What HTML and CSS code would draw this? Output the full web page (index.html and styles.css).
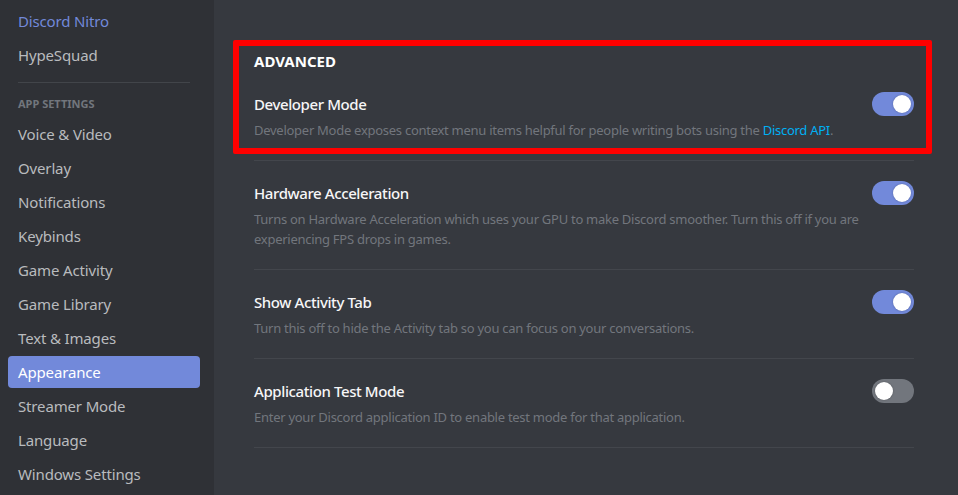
FILE: index.html
```html
<!DOCTYPE html>
<html>
<head>
<meta charset="utf-8">
<link rel="stylesheet" href="styles.css">
</head>
<body>
<div class="app">
  <nav class="sidebar">
    <div class="nav-item nitro">Discord Nitro</div>
    <div class="nav-item">HypeSquad</div>
    <div class="nav-sep"></div>
    <div class="nav-header">App Settings</div>
    <div class="nav-item">Voice &amp; Video</div>
    <div class="nav-item">Overlay</div>
    <div class="nav-item">Notifications</div>
    <div class="nav-item">Keybinds</div>
    <div class="nav-item">Game Activity</div>
    <div class="nav-item">Game Library</div>
    <div class="nav-item">Text &amp; Images</div>
    <div class="nav-item selected">Appearance</div>
    <div class="nav-item">Streamer Mode</div>
    <div class="nav-item">Language</div>
    <div class="nav-item">Windows Settings</div>
  </nav>
  <main class="content">
    <div class="highlight"></div>
    <h2 class="section-title">Advanced</h2>
    <div class="setting">
      <div class="setting-head">
        <div class="setting-title">Developer Mode</div>
        <div class="toggle on"><span class="knob"></span></div>
      </div>
      <div class="setting-desc">Developer Mode exposes context menu items helpful for people writing bots using the <span class="link">Discord API</span>.</div>
    </div>
    <div class="setting">
      <div class="setting-head">
        <div class="setting-title">Hardware Acceleration</div>
        <div class="toggle on"><span class="knob"></span></div>
      </div>
      <div class="setting-desc">Turns on Hardware Acceleration which uses your GPU to make Discord smoother. Turn this off if you are<br>experiencing FPS drops in games.</div>
    </div>
    <div class="setting">
      <div class="setting-head">
        <div class="setting-title">Show Activity Tab</div>
        <div class="toggle on"><span class="knob"></span></div>
      </div>
      <div class="setting-desc">Turn this off to hide the Activity tab so you can focus on your conversations.</div>
    </div>
    <div class="setting">
      <div class="setting-head">
        <div class="setting-title">Application Test Mode</div>
        <div class="toggle"><span class="knob"></span></div>
      </div>
      <div class="setting-desc">Enter your Discord application ID to enable test mode for that application.</div>
    </div>
  </main>
</div>
</body>
</html>
```

FILE: styles.css
```css
* { box-sizing: border-box; }
html, body {
  margin: 0;
  padding: 0;
  height: 100%;
  overflow: hidden;
}
body {
  font-family: "Noto Sans", "Open Sans", sans-serif;
  background: #36393f;
}
.app {
  display: flex;
  height: 495px;
}
.sidebar {
  width: 214px;
  flex-shrink: 0;
  background: #2f3136;
  padding: 5px 14px 0 8px;
  display: flex;
  flex-direction: column;
}
.nav-item {
  height: 32px;
  line-height: 32px;
  padding: 0 10px;
  margin-bottom: 2px;
  font-size: 15px;
  letter-spacing: -0.15px;
  color: #b9bbbe;
  border-radius: 4px;
  white-space: nowrap;
}
.nav-item.nitro { color: #7289da; }
.nav-item.selected {
  background: #7289da;
  color: #fff;
}
.nav-sep {
  height: 1px;
  margin: 9px 10px 0;
  background: #42454a;
}
.nav-header {
  margin-top: 11px;
  margin-bottom: 4px;
  height: 20px;
  line-height: 20px;
  padding: 0 10px;
  font-size: 11px;
  font-weight: 700;
  text-transform: uppercase;
  color: #72767d;
}
.content {
  position: relative;
  flex: 1;
  padding: 51px 44px 0 40px;
}
.highlight {
  position: absolute;
  left: 19px;
  top: 40px;
  width: 699px;
  height: 114px;
  border: 6px solid #ff0000;
  border-radius: 2px;
  pointer-events: none;
}
.section-title {
  margin: 0 0 1px;
  height: 20px;
  line-height: 20px;
  font-size: 15px;
  font-weight: 700;
  text-transform: uppercase;
  color: #fff;
}
.setting {
  padding: 20px 0;
  border-bottom: 1px solid #43464c;
}
.setting-head {
  display: flex;
  justify-content: space-between;
  align-items: center;
  height: 24px;
}
.setting-title {
  font-size: 15px;
  letter-spacing: -0.4px;
  font-weight: 500;
  color: #f6f6f7;
  line-height: 24px;
}
.setting-desc {
  margin-top: 4px;
  font-size: 13px;
  letter-spacing: -0.27px;
  line-height: 20px;
  color: #72767d;
}
.link { color: #00b0f4; }
.toggle {
  width: 42px;
  height: 24px;
  border-radius: 12px;
  background: #72767d;
  position: relative;
  flex-shrink: 0;
}
.toggle.on { background: #7289da; }
.knob {
  position: absolute;
  top: 3px;
  left: 3px;
  width: 18px;
  height: 18px;
  border-radius: 50%;
  background: #fff;
  box-shadow: 0 0 2px rgba(0,0,0,0.3);
}
.toggle.on .knob { left: 21px; }
```
